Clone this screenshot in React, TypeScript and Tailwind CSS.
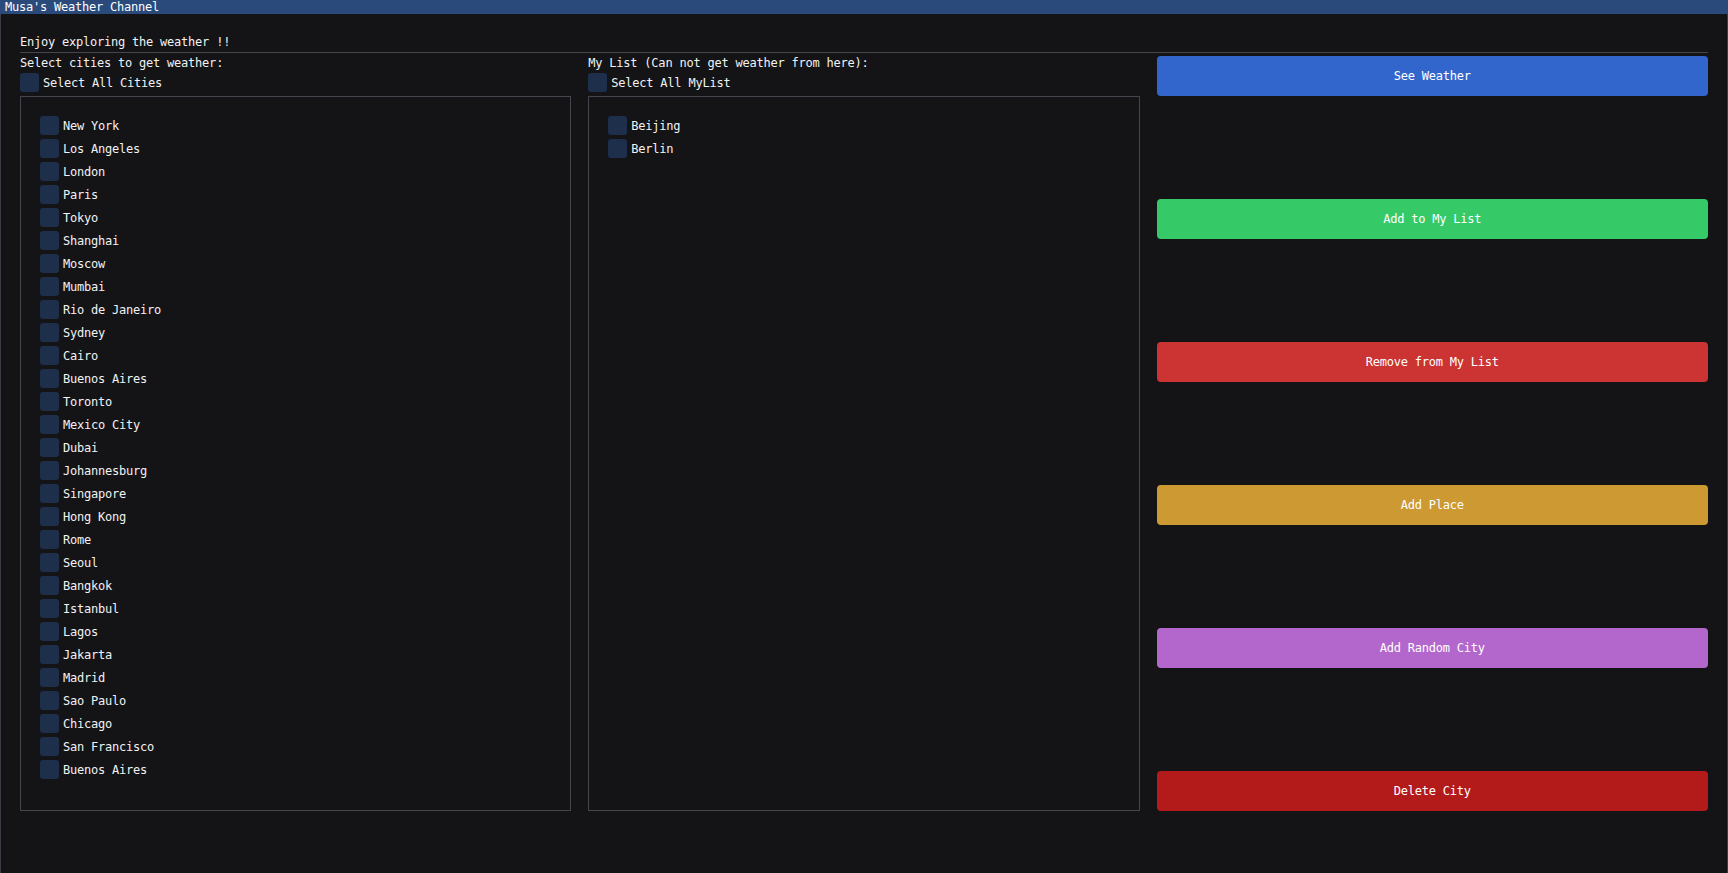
import React from "react";

const cities = [
  "New York",
  "Los Angeles",
  "London",
  "Paris",
  "Tokyo",
  "Shanghai",
  "Moscow",
  "Mumbai",
  "Rio de Janeiro",
  "Sydney",
  "Cairo",
  "Buenos Aires",
  "Toronto",
  "Mexico City",
  "Dubai",
  "Johannesburg",
  "Singapore",
  "Hong Kong",
  "Rome",
  "Seoul",
  "Bangkok",
  "Istanbul",
  "Lagos",
  "Jakarta",
  "Madrid",
  "Sao Paulo",
  "Chicago",
  "San Francisco",
  "Buenos Aires",
];

const myList = ["Beijing", "Berlin"];

const buttons = [
  { label: "See Weather", cls: "bg-[#3366cc]" },
  { label: "Add to My List", cls: "bg-[#35c968]" },
  { label: "Remove from My List", cls: "bg-[#cc3333]" },
  { label: "Add Place", cls: "bg-[#cc9933]" },
  { label: "Add Random City", cls: "bg-[#b366cc]" },
  { label: "Delete City", cls: "bg-[#b31a1a]" },
];

const Check: React.FC<{ label: string }> = ({ label }) => (
  <div className="flex items-center h-[19px] gap-[4px]">
    <div className="w-[19px] h-[19px] rounded-[3px] bg-[#1d2f4b]" />
    <span className="leading-[13px] pt-[2px]">{label}</span>
  </div>
);

const ListColumn: React.FC<{ title: string; selectAll: string; items: string[] }> = ({
  title,
  selectAll,
  items,
}) => (
  <div className="flex flex-col gap-[4px]">
    <div className="h-[13px] leading-[15px]">{title}</div>
    <Check label={selectAll} />
    <div className="h-[715px] border border-[#45454d] pt-[19px] pl-[19px] flex flex-col gap-[4px] overflow-hidden">
      {items.map((c, i) => (
        <Check key={i} label={c} />
      ))}
    </div>
  </div>
);

export default function App() {
  return (
    <div
      className="w-[1728px] h-[873px] flex flex-col bg-[#141417] text-[#f2f2f2] text-[12px] tracking-[-0.22px] overflow-hidden"
      style={{ fontFamily: '"DejaVu Sans Mono", "Liberation Mono", monospace' }}
    >
      {/* title bar */}
      <div className="h-[14px] bg-[#294a7a] px-[5px] leading-[14px] text-white">Musa's Weather Channel</div>

      {/* window body */}
      <div className="flex-1 border-x border-[#3c3c44] pl-[19px] pr-[19px] pt-[21px]">
        <div className="h-[13px] leading-[15px]">Enjoy exploring the weather !!</div>
        <div className="mt-[4px] h-px bg-[#45454d]" />

        <div className="mt-[3px] grid grid-cols-3 gap-x-[17px]">
          <ListColumn title="Select cities to get weather:" selectAll="Select All Cities" items={cities} />
          <ListColumn
            title="My List (Can not get weather from here):"
            selectAll="Select All MyList"
            items={myList}
          />
          <div className="flex flex-col gap-[103px]">
            {buttons.map((b) => (
              <div
                key={b.label}
                className={`h-[40px] rounded-[4px] flex items-center justify-center text-white ${b.cls}`}
              >
                {b.label}
              </div>
            ))}
          </div>
        </div>
      </div>
    </div>
  );
}
